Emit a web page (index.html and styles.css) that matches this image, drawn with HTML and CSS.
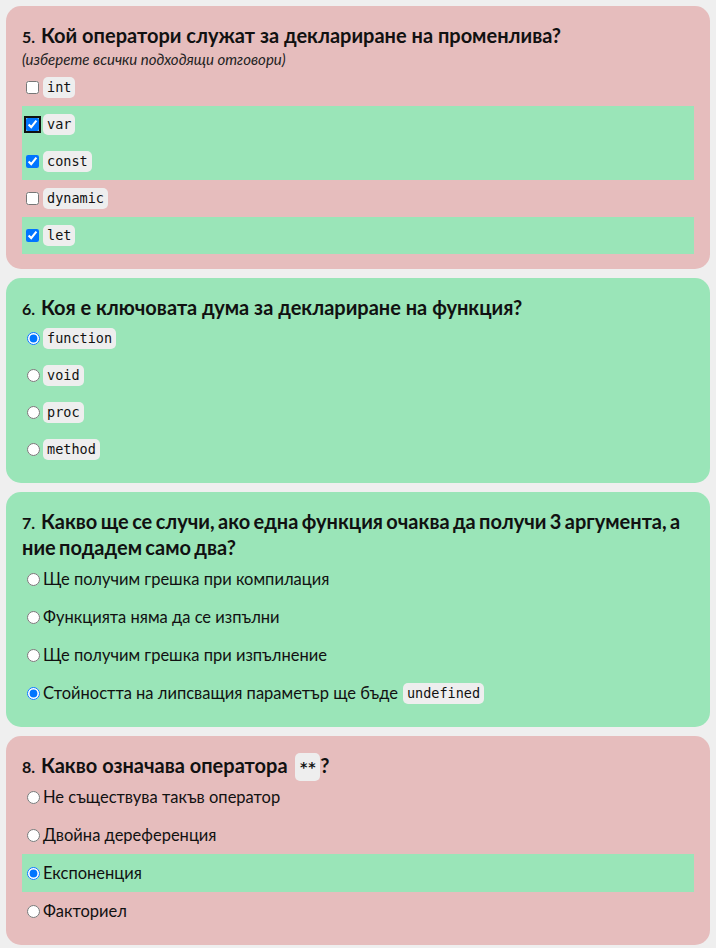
FILE: index.html
```html
<!DOCTYPE html>
<html lang="bg">
<head>
<meta charset="utf-8">
<title>Тест</title>
<link rel="stylesheet" href="styles.css">
</head>
<body>
<div class="quiz">
  <section class="card wrong">
    <h2 class="q"><span class="num">5.</span> Кой оператори служат за деклариране на променлива?</h2>
    <p class="hint">(изберете всички подходящи отговори)</p>
    <label class="opt code-row"><input type="checkbox"><code>int</code></label>
    <label class="opt code-row ok"><input type="checkbox" class="focused" checked><code>var</code></label>
    <label class="opt code-row ok"><input type="checkbox" checked><code>const</code></label>
    <label class="opt code-row"><input type="checkbox"><code>dynamic</code></label>
    <label class="opt code-row ok"><input type="checkbox" checked><code>let</code></label>
  </section>

  <section class="card right">
    <h2 class="q"><span class="num">6.</span> Коя е ключовата дума за деклариране на функция?</h2>
    <label class="opt code-row"><input type="radio" name="q6" checked><code>function</code></label>
    <label class="opt code-row"><input type="radio" name="q6"><code>void</code></label>
    <label class="opt code-row"><input type="radio" name="q6"><code>proc</code></label>
    <label class="opt code-row"><input type="radio" name="q6"><code>method</code></label>
  </section>

  <section class="card right">
    <h2 class="q"><span class="num">7.</span> <span class="tight">Какво ще се случи, ако една функция очаква да получи 3 аргумента, а ние подадем само два?</span></h2>
    <label class="opt text-row"><input type="radio" name="q7">Ще получим грешка при компилация</label>
    <label class="opt text-row"><input type="radio" name="q7">Функцията няма да се изпълни</label>
    <label class="opt text-row"><input type="radio" name="q7">Ще получим грешка при изпълнение</label>
    <label class="opt text-row"><input type="radio" name="q7" checked>Стойността на липсващия параметър ще бъде <code>undefined</code></label>
  </section>

  <section class="card wrong">
    <h2 class="q"><span class="num">8.</span> Какво означава оператора <code class="title-code">**</code>?</h2>
    <label class="opt text-row"><input type="radio" name="q8">Не съществува такъв оператор</label>
    <label class="opt text-row"><input type="radio" name="q8">Двойна дереференция</label>
    <label class="opt text-row ok"><input type="radio" name="q8" checked>Експоненция</label>
    <label class="opt text-row"><input type="radio" name="q8">Факториел</label>
  </section>
</div>
</body>
</html>
```

FILE: styles.css
```css
html, body {
  margin: 0;
  padding: 0;
  background: #efefef;
}
body {
  padding: 6px;
  font-family: Lato, "Noto Sans", sans-serif;
  color: #111;
}
.quiz {
  display: flex;
  flex-direction: column;
  gap: 9px;
}
.card {
  border-radius: 15px;
  padding: 16px 16px 15px;
}
.card.wrong { background: #e6bdbd; }
.card.right { background: #9ae5b8; }
.q {
  margin: 0;
  font-size: 20px;
  line-height: 26px;
  font-weight: 700;
  color: #111;
}
.q .tight { word-spacing: -1.5px; }
.q .num {
  font-size: 16px;
  line-height: 16px;
  margin-right: 1px;
}
.hint {
  margin: 0;
  padding-top: 1px;
  height: 20px;
  line-height: 21px;
  font-size: 15px;
  font-style: italic;
  color: #222;
}
.opt {
  display: flex;
  align-items: center;
  padding-left: 4px;
  font-size: 16.5px;
}
.opt.ok { background: #9ae5b8; }
.code-row { height: 37px; }
.text-row { height: 38px; }
.opt input {
  margin: 0 4px 0 0;
  width: 13px;
  height: 13px;
}
.text-row input { margin: 0 3px 0 1px; }
.code-row input[type="radio"] { margin: 0 3px 0 1px; }
.opt input.focused {
  outline: 2px solid #111;
  outline-offset: 0;
  border-radius: 2px;
}
code {
  font-family: "DejaVu Sans Mono", "Liberation Mono", monospace;
  font-size: 13.5px;
  background: #eeeeee;
  border-radius: 5px;
  padding: 3px 4px;
  line-height: 15px;
}
.text-row code { margin-left: 5px; }
.title-code {
  font-size: 14px;
  line-height: 14px;
  padding: 6px 4px;
  margin-left: 3px;
  vertical-align: 1px;
}
```
